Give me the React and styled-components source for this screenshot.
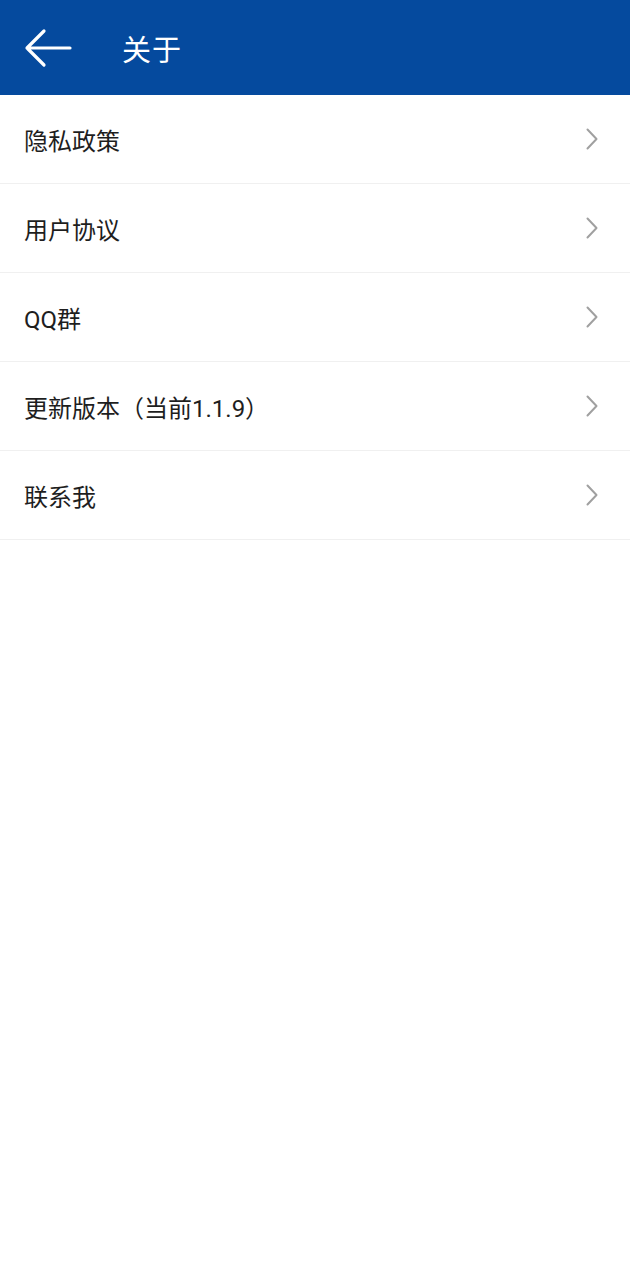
import React from "react"
import styled, { createGlobalStyle } from "styled-components"

const GlobalStyle = createGlobalStyle`
  html, body {
    margin: 0;
    padding: 0;
    background: #ffffff;
  }
  body {
    font-family: Roboto, "Noto Sans CJK SC", sans-serif;
  }
`

const Page = styled.div`
  width: 630px;
  min-height: 1280px;
  background: #ffffff;
`

const Header = styled.header`
  display: flex;
  align-items: center;
  height: 95px;
  padding-left: 24px;
  background: #054a9e;
  color: #ffffff;
`

const BackButton = styled.div`
  display: flex;
  align-items: center;
  width: 48px;
  height: 40px;
  margin-right: 50px;
`

const Title = styled.h1`
  margin: 0;
  font-size: 29px;
  font-weight: 400;
  letter-spacing: 1px;
`

const List = styled.ul`
  list-style: none;
  margin: 0;
  padding: 0;
`

const Row = styled.li`
  display: flex;
  align-items: center;
  justify-content: space-between;
  height: 88px;
  padding: 0 32px 0 24px;
  border-bottom: 1px solid #f0f0f0;
`

const Label = styled.span`
  font-size: 24px;
  color: #1e1e1e;
`

const items = ["隐私政策", "用户协议", "QQ群", "更新版本（当前1.1.9）", "联系我"]

const BackArrow = () => (
  <svg width="48" height="40" viewBox="0 0 48 40" fill="none">
    <path
      d="M46 20H3M20 3L3 20L20 37"
      stroke="#ffffff"
      strokeWidth="3.2"
      strokeLinecap="round"
      strokeLinejoin="round"
    />
  </svg>
)

const Chevron = () => (
  <svg width="12" height="22" viewBox="0 0 12 22" fill="none">
    <path
      d="M1.5 1.5L10.5 11L1.5 20.5"
      stroke="#a0a0a0"
      strokeWidth="2"
      strokeLinecap="round"
      strokeLinejoin="round"
    />
  </svg>
)

const App = () => (
  <Page>
    <GlobalStyle />
    <Header>
      <BackButton>
        <BackArrow />
      </BackButton>
      <Title>关于</Title>
    </Header>
    <List>
      {items.map(item => (
        <Row key={item}>
          <Label>{item}</Label>
          <Chevron />
        </Row>
      ))}
    </List>
  </Page>
)

export default App
